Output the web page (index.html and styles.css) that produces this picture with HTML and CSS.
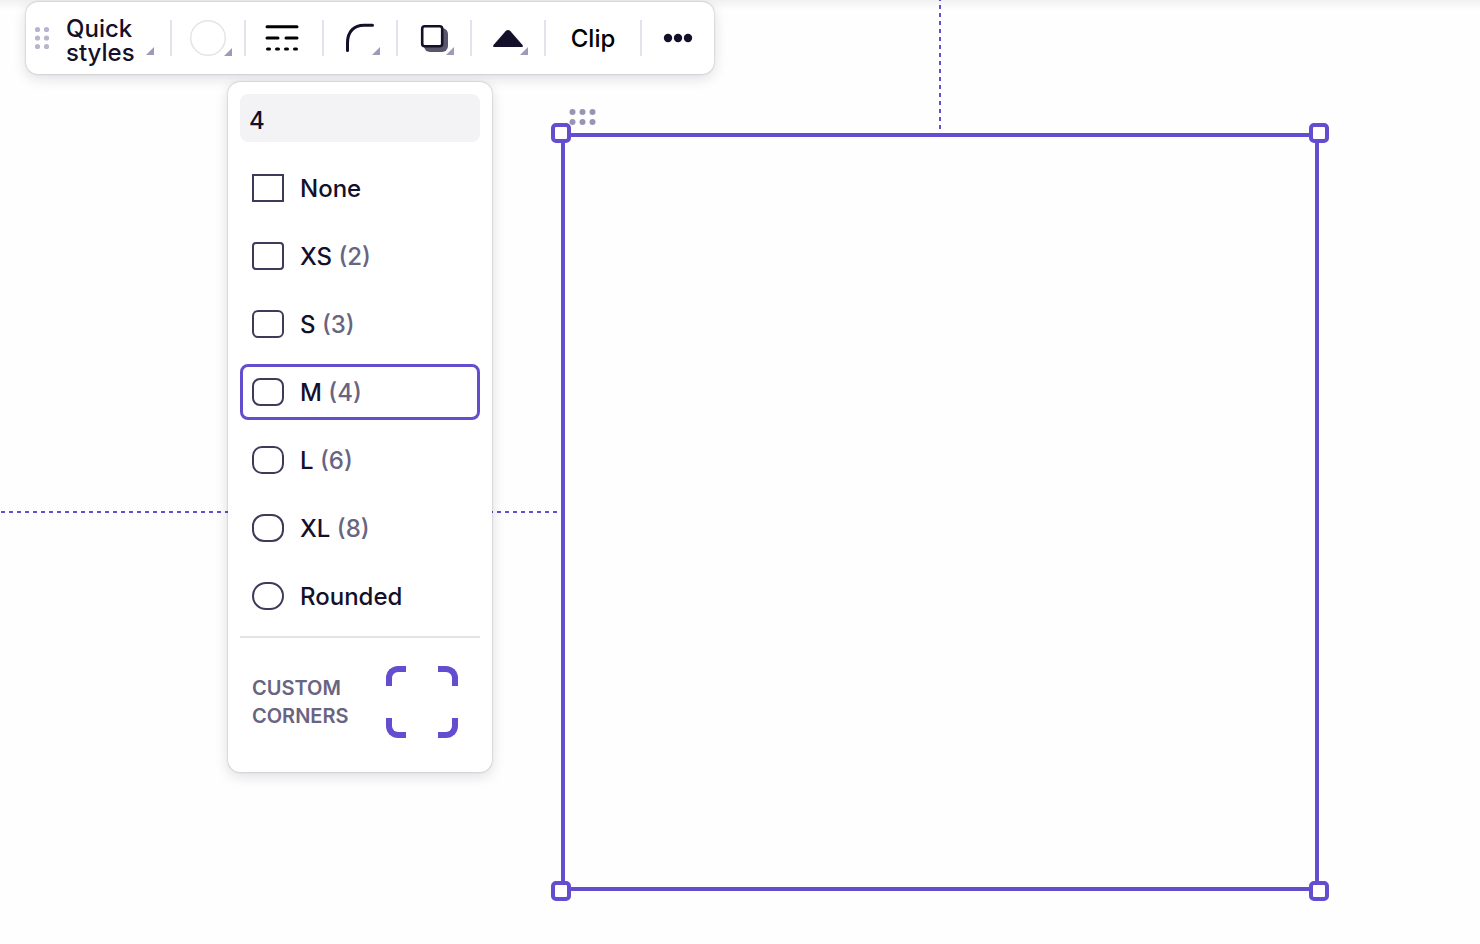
FILE: index.html
```html
<!DOCTYPE html>
<html lang="en">
<head>
<meta charset="utf-8">
<title>Shape editor</title>
<link rel="stylesheet" href="styles.css">
</head>
<body>
<main class="canvas">
  <div class="guide guide-vertical"></div>
  <div class="guide guide-horizontal"></div>
  <div class="shape">
    <span class="handle handle-tl"></span>
    <span class="handle handle-tr"></span>
    <span class="handle handle-bl"></span>
    <span class="handle handle-br"></span>
    <svg class="shape-grip" width="28" height="18" viewBox="0 0 28 18" fill="#9a94b3"><circle cx="3.500" cy="4" r="3"/><circle cx="13.500" cy="4" r="3"/><circle cx="23.500" cy="4" r="3"/><circle cx="3.500" cy="14" r="3"/><circle cx="13.500" cy="14" r="3"/><circle cx="23.500" cy="14" r="3"/></svg>
  </div>

  <div class="toolbar" role="toolbar" aria-label="Shape tools">
    <svg class="grip" width="16" height="24" viewBox="0 0 16 24" fill="#b9b4cf"><circle cx="3.500" cy="3.500" r="2.600"/><circle cx="12.500" cy="3.500" r="2.600"/><circle cx="3.500" cy="12" r="2.600"/><circle cx="12.500" cy="12" r="2.600"/><circle cx="3.500" cy="20.500" r="2.600"/><circle cx="12.500" cy="20.500" r="2.600"/></svg>
    <button class="tool tool-styles more" type="button">Quick<br>styles</button>
    <button class="tool tool-fill more" type="button" aria-label="Fill">
      <svg width="40" height="40" viewBox="0 0 40 40" fill="none"><circle cx="20" cy="20" r="17.300" stroke="#e5e5e5" stroke-width="1.500"/></svg>
    </button>
    <button class="tool tool-line" type="button" aria-label="Line style">
      <svg width="40" height="40" viewBox="0 0 40 40" fill="none" stroke="#000" stroke-width="3" stroke-linecap="round"><path d="M5 8.700H35M5 20H16M24 20H35M5.500 31H7.500M14.500 31H16.500M23.500 31H25.500M32.500 31H34.500"/></svg>
    </button>
    <button class="tool more" type="button" aria-label="Corner radius">
      <svg width="40" height="40" viewBox="0 0 40 40" fill="none" stroke="#14102a" stroke-width="3" stroke-linecap="round"><path d="M7.500 32.500V25C7.500 13 14.500 7.300 24 7.300H32.500"/></svg>
    </button>
    <button class="tool more" type="button" aria-label="Shadow">
      <svg width="40" height="40" viewBox="0 0 40 40"><rect x="10" y="10" width="24" height="24" rx="6" fill="#5a566b"/><path d="M34 26V34H26Z" fill="#fff"/><path d="M34 25V28A6 6 0 0 1 28 34H25Z" fill="#5a566b"/><rect x="8.200" y="8.200" width="20" height="20" rx="2.500" fill="#fff" stroke="#14102a" stroke-width="2.600"/></svg>
    </button>
    <button class="tool more" type="button" aria-label="Shape">
      <svg width="40" height="40" viewBox="0 0 40 40"><path d="M17.500 13.200Q20 11 22.500 13.200L34.500 27Q35.500 29 34 29H6Q4.500 29 5.500 27Z" fill="#14102a"/></svg>
    </button>
    <button class="tool tool-clip" type="button">Clip</button>
    <button class="tool" type="button" aria-label="More">
      <svg width="40" height="40" viewBox="0 0 40 40" fill="#14102a"><circle cx="10" cy="20" r="4.200"/><circle cx="20" cy="20" r="4.200"/><circle cx="30" cy="20" r="4.200"/></svg>
    </button>
  </div>

  <section class="panel" aria-label="Corner radius">
    <input class="radius-value" type="text" value="4" aria-label="Radius">
    <div class="options">
      <label class="option"><input class="swatch r-none" type="radio" name="radius"><span>None</span></label>
      <label class="option"><input class="swatch r-xs" type="radio" name="radius"><span>XS <span class="size">(2)</span></span></label>
      <label class="option"><input class="swatch r-s" type="radio" name="radius"><span>S <span class="size">(3)</span></span></label>
      <label class="option"><input class="swatch r-m" type="radio" name="radius" checked><span>M <span class="size">(4)</span></span></label>
      <label class="option"><input class="swatch r-l" type="radio" name="radius"><span>L <span class="size">(6)</span></span></label>
      <label class="option"><input class="swatch r-xl" type="radio" name="radius"><span>XL <span class="size">(8)</span></span></label>
      <label class="option"><input class="swatch r-full" type="radio" name="radius"><span>Rounded</span></label>
    </div>
    <div class="custom">
      <span class="custom-title">CUSTOM<br>CORNERS</span>
      <div class="corners">
        <button class="corner corner-tl" type="button" aria-label="Top left"></button>
        <button class="corner corner-tr" type="button" aria-label="Top right"></button>
        <button class="corner corner-bl" type="button" aria-label="Bottom left"></button>
        <button class="corner corner-br" type="button" aria-label="Bottom right"></button>
      </div>
    </div>
  </section>
</main>
</body>
</html>
```

FILE: styles.css
```css
:root {
  --accent: #644dcf;
  --ink: #14102a;
  --muted: #69647f;
}

* { box-sizing: border-box; }

body {
  margin: 0;
  font-family: Inter, "Liberation Sans", sans-serif;
  font-size: 24px;
  font-weight: 500;
  color: var(--ink);
}

button, input { font: inherit; color: inherit; }

.canvas {
  position: relative;
  min-height: 100vh;
  overflow: hidden;
  background: linear-gradient(#f1f1f1, #fefefe 10px);
}

/* alignment guides */
.guide { position: absolute; }

.guide-vertical {
  left: 939px;
  top: -3px;
  width: 2px;
  height: 136px;
  background: repeating-linear-gradient(var(--accent) 0 4px, transparent 4px 8px);
}

.guide-horizontal {
  left: -7px;
  top: 511px;
  width: 568px;
  height: 2px;
  background: repeating-linear-gradient(90deg, var(--accent) 0 4px, transparent 4px 8px);
}

/* selected shape */
.shape {
  position: absolute;
  left: 561px;
  top: 133px;
  width: 758px;
  height: 758px;
  border: 4px solid var(--accent);
}

.handle {
  position: absolute;
  width: 20px;
  height: 20px;
  border: 4px solid var(--accent);
  border-radius: 5px;
  background: #fff;
}

.handle-tl { left: -14px; top: -14px; }
.handle-tr { right: -14px; top: -14px; }
.handle-bl { left: -14px; bottom: -14px; }
.handle-br { right: -14px; bottom: -14px; }

.shape-grip { position: absolute; left: 4px; top: -29px; }

/* toolbar */
.toolbar {
  position: absolute;
  left: 26px;
  top: 2px;
  display: flex;
  align-items: center;
  padding: 18px 0;
  border-radius: 12px;
  background: #fff;
  box-shadow: 0 0 2px rgba(0, 0, 0, .3), 0 4px 14px rgba(20, 16, 42, .14);
}

.grip { margin-left: 8px; }

.tool {
  position: relative;
  display: flex;
  align-items: center;
  justify-content: center;
  width: 74px;
  height: 36px;
  padding: 0;
  border: 0;
  border-left: 2px solid #e4e2ec;
  background: none;
  line-height: 24px;
}

.tool svg { flex: none; }

.tool-styles {
  justify-content: flex-start;
  width: 120px;
  padding: 6px 0 0 16px;
  border-left: 0;
  text-align: left;
}

.tool-line { width: 78px; padding-right: 4px; }
.tool-clip { width: 96px; padding-top: 2px; color: #000; }

.more::after {
  content: "";
  position: absolute;
  right: 16px;
  bottom: 1px;
  width: 8px;
  height: 8px;
  background: #a09ab8;
  clip-path: polygon(100% 0, 100% 100%, 0 100%);
}

.tool-fill::after { right: 12px; bottom: 0; }

/* radius panel */
.panel {
  position: absolute;
  left: 228px;
  top: 82px;
  width: 264px;
  padding: 12px;
  border-radius: 12px;
  background: #fff;
  box-shadow: 0 0 2px rgba(0, 0, 0, .3), 0 4px 14px rgba(20, 16, 42, .14);
}

.radius-value {
  display: block;
  width: 100%;
  height: 48px;
  padding: 4px 9px 0;
  border: 0;
  border-radius: 8px;
  background: #f3f3f5;
  outline: 0;
}

.options {
  display: flex;
  flex-direction: column;
  gap: 12px;
  padding: 18px 0 12px;
  border-bottom: 2px solid #e4e4e4;
}

.option {
  display: flex;
  align-items: center;
  gap: 16px;
  height: 56px;
  padding: 0 9px;
  border: 3px solid transparent;
  border-radius: 8px;
}

.option:has(:checked) { border-color: var(--accent); }

.swatch {
  appearance: none;
  flex: none;
  width: 32px;
  height: 28px;
  margin: 0;
  border: 2px solid #3f3a58;
}

.r-none { border-radius: 0; }
.r-xs { border-radius: 4px; }
.r-s { border-radius: 6px; }
.r-m { border-radius: 8px; }
.r-l { border-radius: 10px; }
.r-xl { border-radius: 12px; }
.r-full { border-radius: 14px; }

.size { color: var(--muted); }

.custom {
  display: flex;
  align-items: center;
  justify-content: space-between;
  padding: 28px 22px 22px 12px;
}

.custom-title {
  font-size: 20px;
  font-weight: 600;
  line-height: 28px;
  color: var(--muted);
}

.corners {
  display: grid;
  grid-template-columns: 20px 20px;
  gap: 32px;
}

.corner {
  height: 20px;
  padding: 0;
  border: 0 solid var(--accent);
  background: none;
}

.corner-tl { border-width: 6px 0 0 6px; border-top-left-radius: 12px; }
.corner-tr { border-width: 6px 6px 0 0; border-top-right-radius: 12px; }
.corner-bl { border-width: 0 0 6px 6px; border-bottom-left-radius: 12px; }
.corner-br { border-width: 0 6px 6px 0; border-bottom-right-radius: 12px; }
```
